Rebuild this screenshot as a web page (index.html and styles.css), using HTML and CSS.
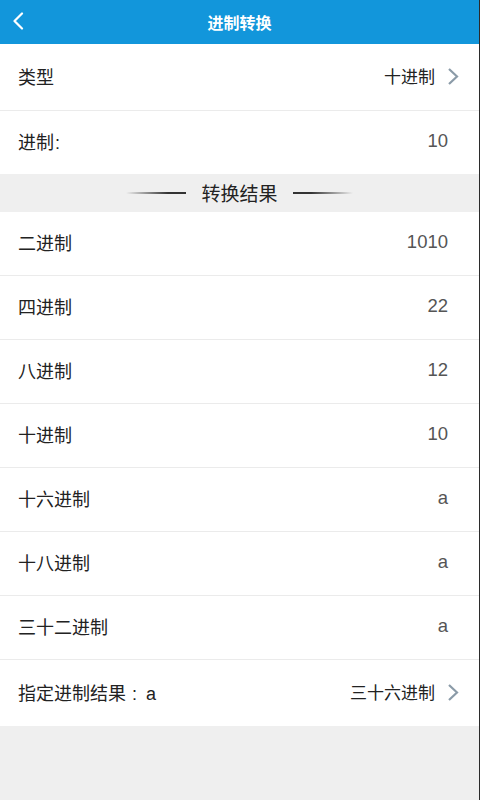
FILE: index.html
```html
<!DOCTYPE html>
<html lang="zh-CN">
<head>
<meta charset="utf-8">
<title>进制转换</title>
<link rel="stylesheet" href="styles.css">
</head>
<body>
<div class="page">
  <header class="topbar">
    <svg class="back" width="12" height="18" viewBox="0 0 12 18"><path d="M10 1.5 L2.5 9 L10 16.5" fill="none" stroke="#fff" stroke-width="2.2" stroke-linecap="round" stroke-linejoin="round"/></svg>
    <h1 class="title">进制转换</h1>
  </header>
  <div class="row row-type">
    <span class="label">类型</span>
    <span class="pick">十进制</span>
    <svg class="chev" width="12" height="17" viewBox="0 0 12 17"><path d="M2 1 L10 8.5 L2 16" fill="none" stroke="#8b9ba8" stroke-width="2.2"/></svg>
  </div>
  <div class="row row-base">
    <span class="label">进制<span class="colon">:</span></span>
    <span class="value">10</span>
  </div>
  <div class="section">
    <span class="line line-left"></span>
    <span class="section-title">转换结果</span>
    <span class="line line-right"></span>
  </div>
  <div class="row result"><span class="label">二进制</span><span class="value">1010</span></div>
  <div class="row result"><span class="label">四进制</span><span class="value">22</span></div>
  <div class="row result"><span class="label">八进制</span><span class="value">12</span></div>
  <div class="row result"><span class="label">十进制</span><span class="value">10</span></div>
  <div class="row result"><span class="label">十六进制</span><span class="value">a</span></div>
  <div class="row result"><span class="label">十八进制</span><span class="value">a</span></div>
  <div class="row result"><span class="label">三十二进制</span><span class="value">a</span></div>
  <div class="row row-custom">
    <span class="label">指定进制结果<span class="colon wide">: </span>a</span>
    <span class="pick">三十六进制</span>
    <svg class="chev" width="12" height="17" viewBox="0 0 12 17"><path d="M2 1 L10 8.5 L2 16" fill="none" stroke="#8b9ba8" stroke-width="2.2"/></svg>
  </div>
</div>
</body>
</html>
```

FILE: styles.css
```css
* { box-sizing: border-box; }
html, body {
  margin: 0;
  padding: 0;
  height: 100%;
}
body {
  background: #efefef;
  font-family: "Liberation Sans", "Noto Sans CJK SC", sans-serif;
}
.page {
  min-height: 800px;
  width: 480px;
  border-right: 1px solid #2b2b2b;
  background: #efefef;
}
.topbar {
  height: 44px;
  background: #1296db;
  display: flex;
  align-items: center;
  justify-content: center;
  position: relative;
}
.back {
  position: absolute;
  left: 12px;
  top: 12px;
}
.title {
  margin: 0;
  color: #fff;
  font-size: 16px;
  font-weight: bold;
  font-family: "Noto Sans CJK SC", sans-serif;
  line-height: 1;
}
.row {
  display: flex;
  align-items: center;
  background: #fff;
  padding: 0 31px 3px 18px;
  border-bottom: 1px solid #ebebeb;
}
.row-type { height: 67px; padding-right: 20px; }
.row-base { height: 63px; border-bottom: none; }
.result { height: 64px; }
.row-custom { height: 66px; border-bottom: none; padding-right: 20px; }
.label {
  flex: 1;
  font-size: 18px;
  color: #222;
}
.colon { margin-left: 1px; }
.colon.wide { margin-left: 6px; margin-right: 4px; }
.value {
  font-size: 18.5px;
  color: #555;
}
.pick {
  font-size: 17px;
  color: #222;
  font-family: "Noto Sans CJK SC", sans-serif;
}
.chev {
  margin-left: 12px;
  margin-top: 1px;
}
.section {
  height: 38px;
  display: flex;
  align-items: center;
  justify-content: center;
  background: #efefef;
  padding-bottom: 1px;
}
.section-title {
  font-size: 19px;
  color: #222;
  margin: 0 15px;
  font-family: "Noto Sans CJK SC", sans-serif;
}
.line {
  width: 60px;
  height: 2px;
  margin-top: 1px;
}
.line-left { background: linear-gradient(to right, rgba(40,40,40,0), #333 70%); }
.line-right { background: linear-gradient(to left, rgba(40,40,40,0), #333 70%); }
```
